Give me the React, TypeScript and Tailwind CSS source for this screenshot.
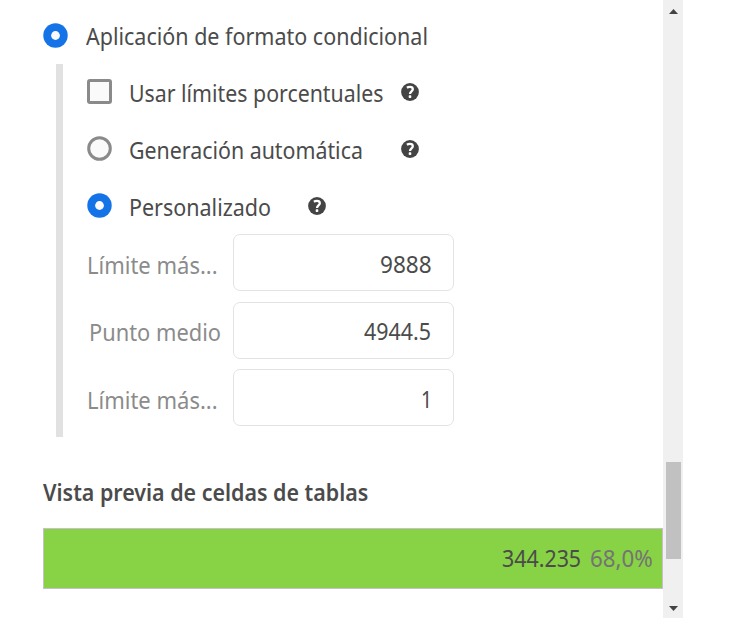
import { useLayoutEffect, useRef, useState } from "react";

/* Single line of text condensed horizontally so that it fills its column. */
function Label({ text, box, className = "" }: { text: string; box: string; className?: string }) {
  const outer = useRef<HTMLSpanElement>(null);
  const inner = useRef<HTMLSpanElement>(null);
  const [scale, setScale] = useState(0.87);
  useLayoutEffect(() => {
    if (outer.current && inner.current) {
      setScale(outer.current.clientWidth / inner.current.offsetWidth);
    }
  }, [text]);
  return (
    <span ref={outer} className={`block h-8 shrink-0 ${box}`}>
      <span
        ref={inner}
        className={`inline-block origin-left whitespace-nowrap text-[23px] leading-8 ${className}`}
        style={{ transform: `scaleX(${scale})` }}
      >
        {text}
      </span>
    </span>
  );
}

function Radio({ checked = false }: { checked?: boolean }) {
  return (
    <svg className="-mt-[1.5px] size-[25px] shrink-0" viewBox="0 0 25 25">
      {checked ? (
        <>
          <circle cx="12.5" cy="12.5" r="12.2" fill="#1473e6" />
          <circle cx="12.5" cy="12.5" r="4.4" fill="#fafafa" />
        </>
      ) : (
        <circle cx="12.5" cy="12.5" r="10.8" fill="#fafafa" stroke="#8a8a8a" strokeWidth="3" />
      )}
    </svg>
  );
}

function Help({ className }: { className: string }) {
  return (
    <svg className={`size-[18px] shrink-0 ${className}`} viewBox="0 0 18 18">
      <circle cx="9" cy="9" r="8.9" fill="#444" />
      <path
        d="M5.9 4.8C6.8 4.2 7.8 3.9 8.9 3.9c1.9 0 2.9 1 2.9 2.3 0 2.2-2.8 2.2-2.8 4.8"
        fill="none"
        stroke="#fff"
        strokeWidth="2.3"
      />
      <rect x="7.7" y="12.3" width="2.6" height="2.6" rx="0.7" fill="#fff" />
    </svg>
  );
}

function Field({ label, labelBox, value, valueBox }: { label: string; labelBox: string; value: string; valueBox: string }) {
  return (
    <div className="flex h-[57px] items-center">
      <div className="w-[146px] shrink-0 pt-1">
        <Label text={label} box={labelBox} className="text-[#8b8b8b]" />
      </div>
      <div className="flex h-[57px] w-[221px] items-center justify-end rounded-[7px] border-[1.5px] border-[#e3e3e3] bg-white pr-[21px] pt-[2px]">
        <Label text={value} box={valueBox} />
      </div>
    </div>
  );
}

export default function App() {
  return (
    <div className="flex h-[618px] w-[736px] overflow-hidden bg-white font-['Noto_Sans',sans-serif] text-[#4b4b4b]">
      <main className="flex w-[663px] shrink-0 flex-col pl-[42.5px]">
        <div className="mt-5 flex h-8 items-center">
          <Radio checked />
          <Label text="Aplicación de formato condicional" box="ml-[18px] w-[342px]" />
        </div>

        <section className="ml-[13px] mt-3 h-[373px] border-l-[7px] border-[#e1e1e1] pl-[24.5px]">
          <div className="flex h-[57px] items-center">
            <div className="-mt-[1.5px] size-[25px] shrink-0 rounded-[3px] border-[3px] border-[#8a8a8a] bg-[#fafafa]" />
            <Label text="Usar límites porcentuales" box="ml-[17px] w-[254px]" />
            <Help className="-mt-px ml-[18px]" />
          </div>
          <div className="flex h-[57px] items-center">
            <Radio />
            <Label text="Generación automática" box="ml-[17px] w-[234px]" />
            <Help className="-mt-px ml-[38px]" />
          </div>
          <div className="flex h-[56px] items-center">
            <Radio checked />
            <Label text="Personalizado" box="ml-[17px] mt-px w-[142px]" />
            <Help className="ml-[37px]" />
          </div>
          <div className="flex flex-col gap-[10.5px]">
            <Field label="Límite más..." labelBox="-ml-[0.5px] w-[131px]" value="9888" valueBox="w-[52px]" />
            <Field label="Punto medio" labelBox="ml-[2px] w-[132px]" value="4944.5" valueBox="w-[67px] mr-px" />
            <Field label="Límite más..." labelBox="-ml-[0.5px] w-[131px]" value="1" valueBox="w-[11px]" />
          </div>
        </section>

        <h2 className="mt-[38.5px] h-8">
          <Label text="Vista previa de celdas de tablas" box="w-[325px]" className="font-semibold" />
        </h2>
        <div className="mt-[20.5px] flex h-[61px] w-[620.5px] items-center justify-end border-[1.5px] border-[#c8bfcb] bg-[#87d245] pb-[2px] pr-[9px]">
          <Label text="344.235" box="w-[79px]" />
          <Label text="68,0%" box="ml-[9px] w-[63px]" className="text-[#747474]" />
        </div>
      </main>

      <aside className="flex w-5 shrink-0 flex-col items-center bg-[#f0f0f0]">
        <svg className="mt-[9px] h-[5px] w-[9px]" viewBox="0 0 9 5">
          <path d="M0 5 4.5 0 9 5Z" fill="#444" />
        </svg>
        <div className="ml-px mt-[447.5px] h-[97px] w-[15px] bg-[#c1c1c1]" />
        <svg className="mt-[47px] h-[5px] w-[9px]" viewBox="0 0 9 5">
          <path d="M0 0H9L4.5 5Z" fill="#444" />
        </svg>
      </aside>
    </div>
  );
}
